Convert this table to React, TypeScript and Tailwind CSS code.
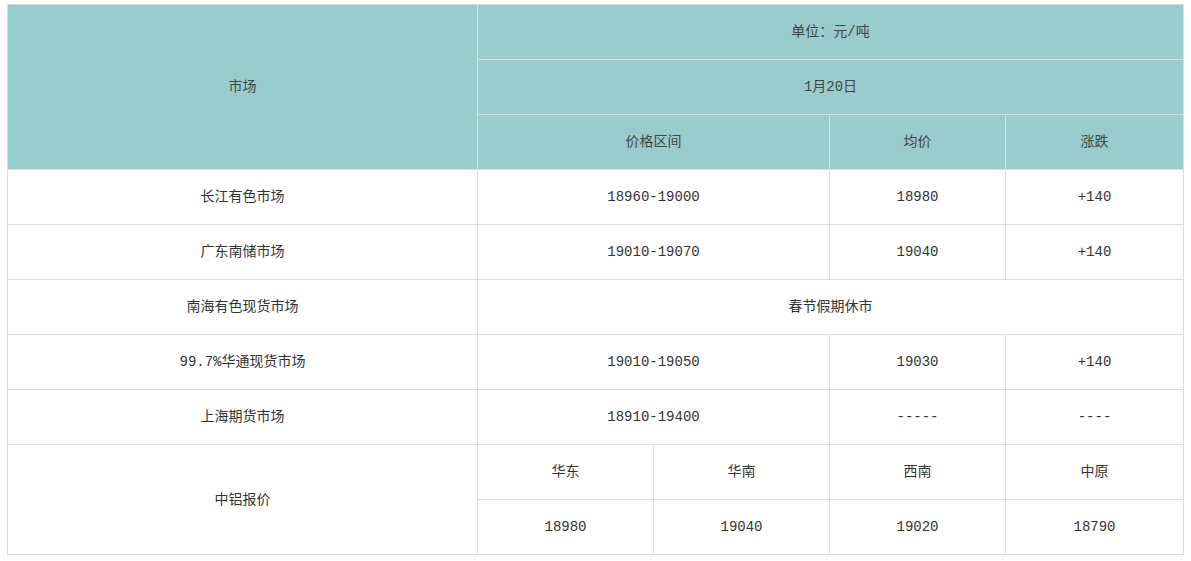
const cell = "border border-[#dddddd] text-center align-middle p-0";

const priceRows = [
  { market: "长江有色市场", range: "18960-19000", avg: "18980", change: "+140" },
  { market: "广东南储市场", range: "19010-19070", avg: "19040", change: "+140" },
];

const laterRows = [
  { market: "99.7%华通现货市场", range: "19010-19050", avg: "19030", change: "+140" },
  { market: "上海期货市场", range: "18910-19400", avg: "-----", change: "----" },
];

function PriceRow({ row }: { row: (typeof priceRows)[number] }) {
  return (
    <tr className="h-[55px]">
      <td className={cell}>{row.market}</td>
      <td className={cell} colSpan={2}>
        {row.range}
      </td>
      <td className={cell}>{row.avg}</td>
      <td className={cell}>{row.change}</td>
    </tr>
  );
}

export default function App() {
  return (
    <div className="bg-white pl-[7px] pt-[4px] pr-[8px] pb-[6px]">
      <table
        className="w-[1176px] table-fixed border-collapse text-[14px] leading-none text-[#333333]"
        style={{ fontFamily: '"Liberation Mono", "Noto Sans CJK SC", monospace' }}
      >
        <colgroup>
          <col className="w-[470px]" />
          <col className="w-[176px]" />
          <col className="w-[176px]" />
          <col className="w-[176px]" />
          <col className="w-[178px]" />
        </colgroup>
        <thead className="bg-[#99cccc] text-[#444444]">
          <tr className="h-[55px]">
            <th className={`${cell} font-normal`} rowSpan={3}>
              市场
            </th>
            <th className={`${cell} font-normal`} colSpan={4}>
              单位：元/吨
            </th>
          </tr>
          <tr className="h-[55px]">
            <th className={`${cell} font-normal`} colSpan={4}>
              1月20日
            </th>
          </tr>
          <tr className="h-[55px]">
            <th className={`${cell} font-normal`} colSpan={2}>
              价格区间
            </th>
            <th className={`${cell} font-normal`}>均价</th>
            <th className={`${cell} font-normal`}>涨跌</th>
          </tr>
        </thead>
        <tbody>
          {priceRows.map((r) => (
            <PriceRow key={r.market} row={r} />
          ))}
          <tr className="h-[55px]">
            <td className={cell}>南海有色现货市场</td>
            <td className={cell} colSpan={4}>
              春节假期休市
            </td>
          </tr>
          {laterRows.map((r) => (
            <PriceRow key={r.market} row={r} />
          ))}
          <tr className="h-[55px]">
            <td className={cell} rowSpan={2}>
              中铝报价
            </td>
            <td className={cell}>华东</td>
            <td className={cell}>华南</td>
            <td className={cell}>西南</td>
            <td className={cell}>中原</td>
          </tr>
          <tr className="h-[55px]">
            <td className={cell}>18980</td>
            <td className={cell}>19040</td>
            <td className={cell}>19020</td>
            <td className={cell}>18790</td>
          </tr>
        </tbody>
      </table>
    </div>
  );
}
